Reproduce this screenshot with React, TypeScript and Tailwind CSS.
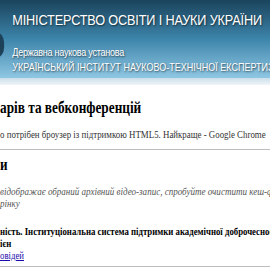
export default function App() {
  return (
    <div className="w-[270px] h-[270px] overflow-hidden bg-white">
      {/* the page is a bit squeezed sideways in the shot */}
      <div className="w-[330px] origin-top-left scale-x-[0.82]">
        <div className="relative h-[78px] bg-gradient-to-b from-[#1b445d] via-[#3d85ab] to-[#8ec7e3] font-['Liberation_Sans',Arial,sans-serif] text-white [text-shadow:1px_1px_2px_rgba(0,0,0,0.6)]">
          <div className="absolute left-[-16px] top-[32px] w-[21px] h-[26px] rounded-full bg-[#1d4159]" />
          <div className="pl-[15px] pt-[11px] text-[15.5px] leading-[18px] tracking-[-0.2px] whitespace-nowrap">
            МІНІСТЕРСТВО ОСВІТИ І НАУКИ УКРАЇНИ
          </div>
          <div className="pl-[15px] pt-[16px] text-[11px] leading-[14px] tracking-[-0.3px] whitespace-nowrap">
            Державна наукова установа
          </div>
          <div className="pl-[15px] pt-[1px] text-[11px] leading-[14px] tracking-[0px] whitespace-nowrap">
            УКРАЇНСЬКИЙ ІНСТИТУТ НАУКОВО-ТЕХНІЧНОЇ ЕКСПЕРТИЗИ
          </div>
        </div>
        <div className="h-[7px] bg-gradient-to-b from-[#cadeea] to-[#f0f5f8]" />

        <div className="font-['Liberation_Serif','Times_New_Roman',serif] text-black whitespace-nowrap">
          <h1 className="mt-[13px] text-[16.2px] leading-[20px] font-bold">арів та вебконференцій</h1>
          <p className="mt-[9px] text-[10.8px] leading-[14px] text-[#333]">
            о потрібен броузер із підтримкою HTML5. Найкраще - Google Chrome
          </p>
          <hr className="mt-[8px] border-t border-[#bdbdbd]" />
          <h2 className="mt-[6px] text-[16px] leading-[18px] font-bold">и</h2>
          <p className="mt-[11px] text-[11px] leading-[12px] italic text-[#555]">
            відображає обраний архівний відео-запис, спробуйте очистити кеш-файли
            <br />
            рінку
          </p>
          <div className="mt-[16px] text-[10.7px] leading-[12px]">
            <div className="font-bold">ність. Інституціональна система підтримки академічної доброчесності</div>
            <div className="font-bold">ієн</div>
            <div>
              <a href="#" className="text-[#1a0dab] underline">овідей</a>
            </div>
          </div>
          <hr className="mt-[5px] border-t border-[#bdbdbd]" />
        </div>
      </div>
    </div>
  );
}
